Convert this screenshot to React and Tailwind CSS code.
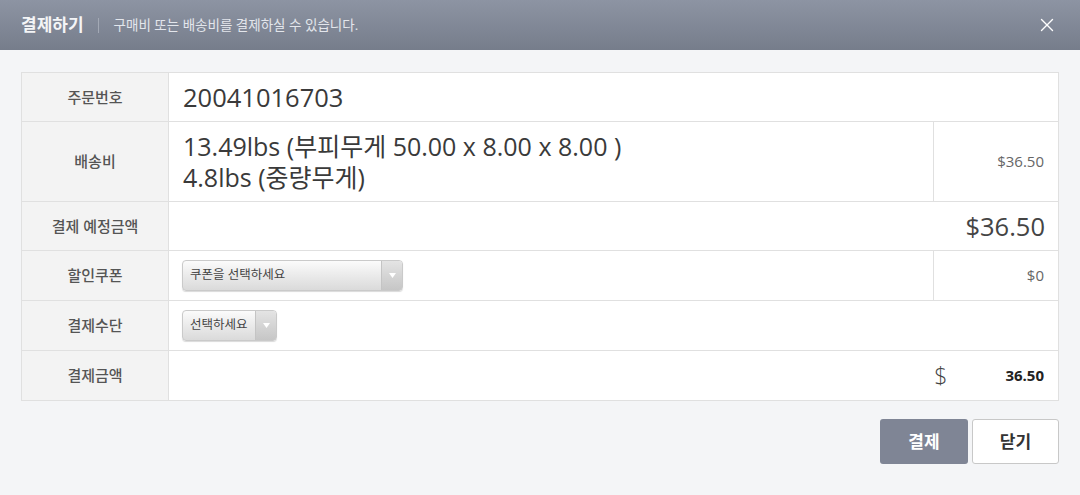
import { X } from 'lucide-react'

const font = { fontFamily: '"Open Sans", "Noto Sans CJK KR", sans-serif' }

function Select({ label, width }) {
  return (
    <div
      className={`flex h-[31px] ${width} overflow-hidden rounded-[4px] border border-[#cacaca] bg-gradient-to-b from-[#fbfbfb] to-[#dadada] shadow-[0_1px_1px_rgba(0,0,0,0.15)]`}
    >
      <div className="flex flex-1 items-center pl-[7px] text-[12.5px] text-[#444]">{label}</div>
      <div className="flex w-[21px] items-center justify-center border-l border-[#c4c4c4] bg-gradient-to-b from-[#e4e4e4] to-[#c6c6c6]">
        <svg width="7" height="5" viewBox="0 0 7 5">
          <path d="M0 0h7L3.5 5z" fill="#fff" />
        </svg>
      </div>
    </div>
  )
}

function Row({ label, children, h = 'h-[50px]', last }) {
  return (
    <div className={`flex ${h} ${last ? '' : 'border-b border-[#e0e0e0]'}`}>
      <div className="flex w-[147px] shrink-0 items-center justify-center border-r border-[#e0e0e0] bg-[#f3f3f3] text-[15px] font-medium text-[#555]">
        {label}
      </div>
      {children}
    </div>
  )
}

export default function App() {
  return (
    <div className="flex h-[495px] w-[1080px] flex-col bg-[#f4f5f7]" style={font}>
      {/* header */}
      <div className="flex h-[50px] shrink-0 items-center bg-gradient-to-b from-[#8d94a3] to-[#767d8b] pl-[21px] pr-[22px]">
        <span className="text-[17px] font-bold text-[#f4f5f7]">결제하기</span>
        <span className="ml-[14px] mr-[15px] h-[15px] w-px bg-[#a3a9b5]" />
        <span className="text-[13.5px] text-[#e3e6ec]">구매비 또는 배송비를 결제하실 수 있습니다.</span>
        <X className="ml-auto text-white" size={22} strokeWidth={1.5} />
      </div>

      <div className="px-[21px] pt-[22px]">
        <div className="border border-[#e0e0e0] bg-white">
          <Row label="주문번호" h="h-[49px]">
            <div className="flex flex-1 items-center pl-[14px] text-[25.5px] text-[#3a3a3a]">20041016703</div>
          </Row>
          <Row label="배송비" h="h-[80px]">
            <div className="flex flex-1 flex-col justify-center pl-[14px] text-[25px] leading-[31px] text-[#3a3a3a]">
              <div>13.49lbs (부피무게 50.00 x 8.00 x 8.00 )</div>
              <div>4.8lbs (중량무게)</div>
            </div>
            <div className="flex w-[125px] items-center justify-end border-l border-[#e0e0e0] pr-[14px] text-[15px] text-[#666]">
              $36.50
            </div>
          </Row>
          <Row label="결제 예정금액" h="h-[49px]">
            <div className="flex flex-1 items-center justify-end pr-[13px] text-[25.5px] text-[#444]">$36.50</div>
          </Row>
          <Row label="할인쿠폰">
            <div className="flex flex-1 items-center pl-[13px]">
              <Select label="쿠폰을 선택하세요" width="w-[221px]" />
            </div>
            <div className="flex w-[125px] items-center justify-end border-l border-[#e0e0e0] pr-[14px] text-[15px] text-[#666]">
              $0
            </div>
          </Row>
          <Row label="결제수단">
            <div className="flex flex-1 items-center pl-[13px]">
              <Select label="선택하세요" width="w-[95px]" />
            </div>
          </Row>
          <Row label="결제금액" h="h-[49px]" last>
            <div className="flex flex-1 items-center justify-end pr-[14px]">
              <span className="mr-[58px] text-[23px] font-light text-[#444]">$</span>
              <span className="text-[15px] font-bold text-[#222]">36.50</span>
            </div>
          </Row>
        </div>

        <div className="mt-[18px] flex justify-end gap-[4px]">
          <button className="h-[45px] w-[88px] rounded-[3px] bg-[#7f8595] text-[17px] font-bold text-white">
            결제
          </button>
          <button className="h-[45px] w-[87px] rounded-[3px] border border-[#c8c8c8] bg-white text-[17px] font-bold text-[#333]">
            닫기
          </button>
        </div>
      </div>
    </div>
  )
}
